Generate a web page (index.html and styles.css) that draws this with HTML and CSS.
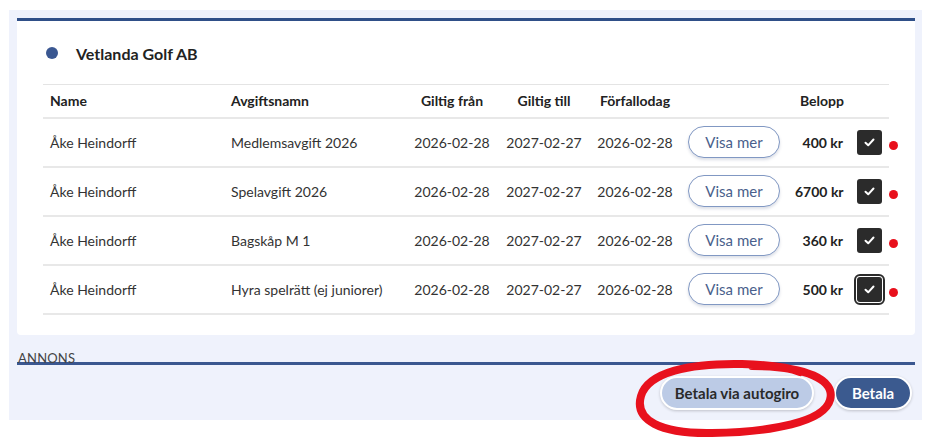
FILE: index.html
```html
<!DOCTYPE html>
<html>

<head>
    <title>Avgifter</title>
    <link rel="stylesheet" href="styles.css">
</head>

<body>
    <div class="panel">
        <div class="card">
            <div class="club">
                <span class="club-dot"></span>
                <span class="club-name">Vetlanda Golf AB</span>
            </div>
            <table class="fees">
                <tr>
                    <th class="col-name">Name</th>
                    <th class="col-fee">Avgiftsnamn</th>
                    <th class="col-date">Giltig från</th>
                    <th class="col-date">Giltig till</th>
                    <th class="col-due">Förfallodag</th>
                    <th class="col-more"></th>
                    <th class="col-sum">Belopp</th>
                    <th class="col-check"></th>
                </tr>
                <tr>
                    <td>Åke Heindorff</td>
                    <td>Medlemsavgift 2026</td>
                    <td class="center">2026-02-28</td>
                    <td class="center">2027-02-27</td>
                    <td class="center">2026-02-28</td>
                    <td><button class="more">Visa mer</button></td>
                    <td class="sum">400 kr</td>
                    <td class="check-cell"><span class="check"><svg width="11" height="9" viewBox="0 0 11 9"><path d="M1.5 4.8 L4.2 7.3 L9.5 1.5" fill="none" stroke="#fff" stroke-width="2" stroke-linecap="round" stroke-linejoin="round"/></svg></span><span class="flag"></span></td>
                </tr>
                <tr>
                    <td>Åke Heindorff</td>
                    <td>Spelavgift 2026</td>
                    <td class="center">2026-02-28</td>
                    <td class="center">2027-02-27</td>
                    <td class="center">2026-02-28</td>
                    <td><button class="more">Visa mer</button></td>
                    <td class="sum">6700 kr</td>
                    <td class="check-cell"><span class="check"><svg width="11" height="9" viewBox="0 0 11 9"><path d="M1.5 4.8 L4.2 7.3 L9.5 1.5" fill="none" stroke="#fff" stroke-width="2" stroke-linecap="round" stroke-linejoin="round"/></svg></span><span class="flag"></span></td>
                </tr>
                <tr>
                    <td>Åke Heindorff</td>
                    <td>Bagskåp M 1</td>
                    <td class="center">2026-02-28</td>
                    <td class="center">2027-02-27</td>
                    <td class="center">2026-02-28</td>
                    <td><button class="more">Visa mer</button></td>
                    <td class="sum">360 kr</td>
                    <td class="check-cell"><span class="check"><svg width="11" height="9" viewBox="0 0 11 9"><path d="M1.5 4.8 L4.2 7.3 L9.5 1.5" fill="none" stroke="#fff" stroke-width="2" stroke-linecap="round" stroke-linejoin="round"/></svg></span><span class="flag"></span></td>
                </tr>
                <tr>
                    <td>Åke Heindorff</td>
                    <td>Hyra spelrätt (ej juniorer)</td>
                    <td class="center">2026-02-28</td>
                    <td class="center">2027-02-27</td>
                    <td class="center">2026-02-28</td>
                    <td><button class="more">Visa mer</button></td>
                    <td class="sum">500 kr</td>
                    <td class="check-cell"><span class="check focused"><svg width="11" height="9" viewBox="0 0 11 9"><path d="M1.5 4.8 L4.2 7.3 L9.5 1.5" fill="none" stroke="#fff" stroke-width="2" stroke-linecap="round" stroke-linejoin="round"/></svg></span><span class="flag"></span></td>
                </tr>
            </table>
        </div>

        <div class="ad-label">ANNONS</div>
        <div class="ad-rule"></div>

        <div class="actions">
            <button class="btn btn-light">Betala via autogiro</button>
            <button class="btn btn-dark">Betala</button>
        </div>
    </div>

    <!-- hand drawn marking around the autogiro button -->
    <svg class="marker" width="933" height="443" viewBox="0 0 933 443">
        <path d="M 752 366 C 806 366, 836 380, 830 400 C 824 422, 772 432, 712 433 C 660 434, 634 420, 641 396 C 648 372, 690 363, 742 364 C 770 365, 790 368, 800 372"
            fill="none" stroke="#e8111d" stroke-width="8" stroke-linecap="round" />
    </svg>
</body>

</html>
```

FILE: styles.css
```css
body {
    margin: 0;
    padding: 0;
    background-color: #ffffff;
    font-family: Lato, "Noto Sans", sans-serif;
    color: #333333;
}

.panel {
    width: 913px;
    height: 410px;
    margin: 10px 0 0 9px;
    padding: 8px 0 0 8px;
    box-sizing: border-box;
    background-color: #eff2fc;
}

.card {
    width: 898px;
    background-color: #ffffff;
    border-top: 3px solid #2f4f88;
    border-radius: 0 0 4px 4px;
    padding: 20px 26px 20px 26px;
    box-sizing: border-box;
}

.club {
    display: flex;
    align-items: center;
    height: 24px;
    margin-bottom: 19px;
}

.club-dot {
    width: 12px;
    height: 12px;
    border-radius: 50%;
    background-color: #3a5791;
    margin-left: 3px;
    margin-right: 18px;
}

.club-name {
    font-size: 16px;
    font-weight: 700;
    color: #222222;
}

.fees {
    width: 846px;
    border-collapse: collapse;
    table-layout: fixed;
    font-size: 14px;
}

.fees th,
.fees td {
    box-sizing: border-box;
}

.fees th {
    height: 33px;
    font-weight: 700;
    color: #222222;
    text-align: left;
    padding: 0 7px;
    border-top: 1px solid #e4e4e4;
    border-bottom: 2px solid #e8e8e8;
}

.fees td {
    height: 49px;
    padding: 0 7px;
    border-bottom: 2px solid #e8e8e8;
    white-space: nowrap;
}

.col-name { width: 181px; }
.col-fee { width: 182px; }
.col-date { width: 92px; }
.col-due { width: 90px; }
.col-more { width: 108px; }
.col-sum { width: 62px; }
.col-check { width: 39px; }

.fees th.col-date,
.fees th.col-due,
.center {
    text-align: center;
    padding: 0;
}

.fees th.col-sum,
.sum {
    text-align: right;
    padding-right: 6px;
}

.sum {
    font-weight: 700;
    color: #222222;
}

.more {
    width: 92px;
    height: 32px;
    margin-left: 1px;
    border: 1.5px solid #8198c3;
    border-radius: 16px;
    background-color: #ffffff;
    color: #4a5f8c;
    font-family: Lato, "Noto Sans", sans-serif;
    font-size: 15px;
    box-shadow: 0 2px 3px rgba(60, 80, 120, 0.18);
}

.check-cell {
    position: relative;
}

.check {
    display: flex;
    justify-content: center;
    align-items: center;
    width: 25px;
    height: 25px;
    border-radius: 3px;
    background-color: #2b2b2b;
}

.check.focused {
    outline: 2px solid #2b2b2b;
    outline-offset: 1px;
    box-shadow: 0 0 0 1px #ffffff;
}

.flag {
    position: absolute;
    left: 39px;
    top: 22px;
    width: 9px;
    height: 9px;
    border-radius: 50%;
    background-color: #e8101c;
}

.ad-label {
    margin-top: 16px;
    font-size: 13px;
    line-height: 14px;
    color: #444444;
    letter-spacing: 0.2px;
    margin-left: 1px;
}

.ad-rule {
    width: 898px;
    height: 3px;
    margin-top: -3px;
    background-color: #3a5790;
}

.actions {
    display: flex;
    justify-content: flex-end;
    gap: 20px;
    width: 895px;
    margin-top: 11px;
}

.btn {
    height: 34px;
    border-radius: 17px;
    border: 2px solid #ffffff;
    font-family: Lato, "Noto Sans", sans-serif;
    font-size: 15px;
    font-weight: 700;
    box-shadow: 0 1px 3px rgba(0, 0, 0, 0.2);
}

.btn-light {
    width: 154px;
    background-color: #bccbe6;
    color: #2a2a2a;
}

.btn-dark {
    width: 78px;
    background-color: #3b5a8f;
    color: #ffffff;
}

.marker {
    position: absolute;
    left: 0;
    top: 0;
    pointer-events: none;
}
```
